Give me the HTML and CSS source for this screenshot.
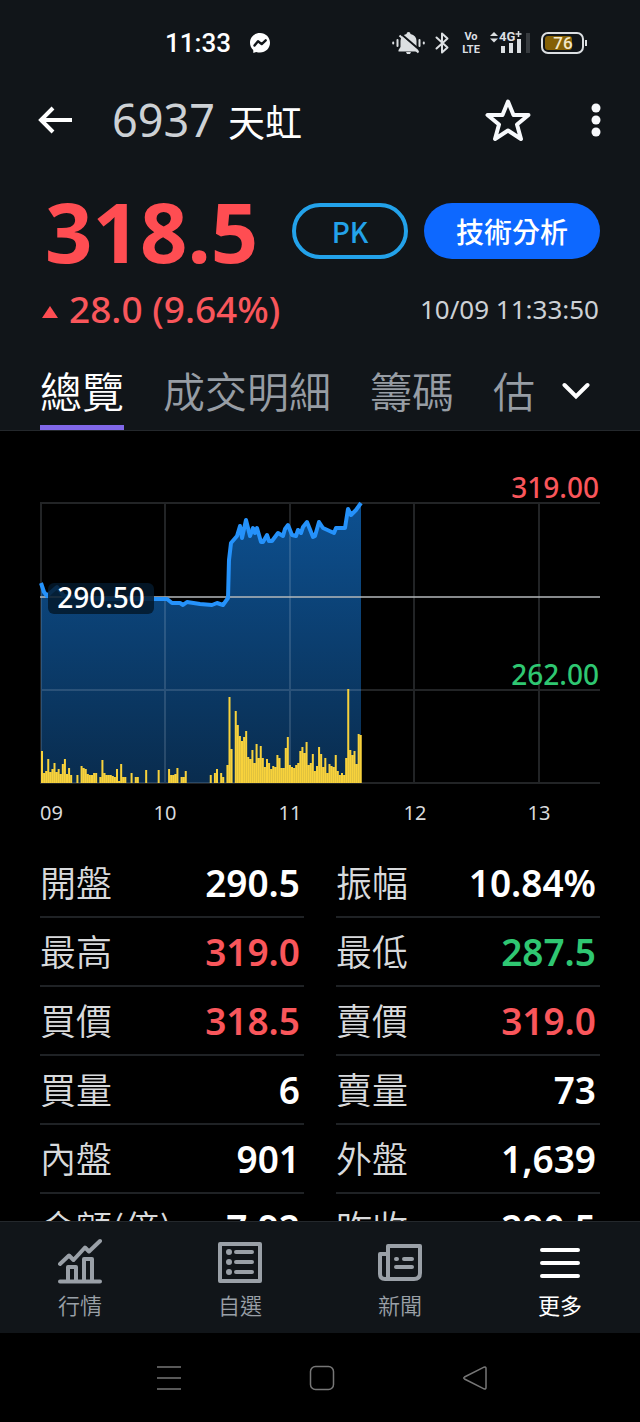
FILE: index.html
```html
<!DOCTYPE html>
<html lang="zh-Hant">
<head>
<meta charset="utf-8">
<meta name="viewport" content="width=device-width, initial-scale=1">
<title>6937 天虹</title>
<link rel="stylesheet" href="styles.css">
</head>
<body>
<header class="header">
  <div class="status">
    <div class="status-group">
      <time class="clock">11:33</time>
      <svg class="messenger" width="20" height="20" viewBox="0 0 20 20"><path d="M10 0C4.300 0 0 4.200 0 9.800c0 2.900 1.200 5.400 3.200 7.100l.2 3.100 2.800-1.100c1.200.4 2.500.6 3.800.6 5.700 0 10-4.200 10-9.700S15.700 0 10 0z" fill="#fff"/><path d="M4.500 12.500 8 8.200l3.700 2.900 4-3.800" fill="none" stroke="#111519" stroke-width="2.400" stroke-linejoin="round" stroke-linecap="round"/></svg>
    </div>
    <div class="status-group status-icons">
      <svg width="33" height="24" viewBox="0 0 33 24"><path d="M16.500 1a2 2 0 0 1 2 2c4 1 6 3.500 6 7v6l2 3v1.500h-20V19l2-3v-6c0-3.500 2-6 6-7a2 2 0 0 1 2-2z" fill="#dcdfe2"/><path d="M14 21h5l-1 2h-3z" fill="#dcdfe2"/><path d="M8.500 2.500 29 20" stroke="#111519" stroke-width="2"/><path d="m7.500 4.500 19 17" stroke="#dcdfe2" stroke-width="2"/><path d="M1.200 11.500v1M5.500 9v6M27.500 9v6M31.800 11.500v1" stroke="#dcdfe2" stroke-width="2" stroke-linecap="round"/></svg>
      <svg class="bluetooth" width="15" height="24" viewBox="0 0 15 24"><path d="m1.500 6.500 11 10L7 21.500v-19l5.500 5-11 10" fill="none" stroke="#dcdfe2" stroke-width="2" stroke-linejoin="round" stroke-linecap="round"/></svg>
      <svg class="volte" width="18" height="24" viewBox="0 0 18 24"><text class="tiny" x="9" y="9" text-anchor="middle">Vo</text><text class="tiny" x="9" y="22" text-anchor="middle">LTE</text></svg>
      <svg class="signal" width="40" height="24" viewBox="0 0 40 24"><path d="M0 5 4 1l4 4zM0 7.500h8l-4 4z" fill="#dcdfe2"/><path d="M11 15h4v7h-4zM19 12h4v10h-4zM27 8h4v14h-4z" fill="#dcdfe2"/><text class="tiny network" x="9" y="10">4G</text><path d="M28.500 0v6M25.500 3h6" stroke="#dcdfe2" stroke-width="1.500"/><path d="M36 2h4v20h-4z" fill="#373b3f"/></svg>
      <svg class="battery" width="46" height="22" viewBox="0 0 46 22"><rect x="1" y="1" width="41" height="20" rx="6" fill="none" stroke="#dcdfe2" stroke-width="2"/><rect x="4" y="4" width="27" height="14" rx="3" fill="#846006"/><path d="M45 8v6" stroke="#dcdfe2" stroke-width="2"/><text class="charge" x="22" y="17" text-anchor="middle">76</text></svg>
    </div>
  </div>

  <div class="appbar">
    <button class="icon-btn" aria-label="返回"><svg width="36" height="30" viewBox="0 0 36 30"><path d="M35 15H4M16 3 4 15l12 12" fill="none" stroke="#fff" stroke-width="4"/></svg></button>
    <h1 class="title"><span class="code">6937</span><span>天虹</span></h1>
    <button class="icon-btn" aria-label="加入自選"><svg width="46" height="44" viewBox="0 0 46 44"><path d="m23 3.500 5.500 13.500h15L32 26.500 36 41l-13-8.500L10 41l4-14.500L2.500 17h15z" fill="none" stroke="#f7f9fc" stroke-width="4" stroke-linejoin="round"/></svg></button>
    <button class="icon-btn more-btn" aria-label="更多選項"><svg width="10" height="34" viewBox="0 0 10 34"><g fill="#f7f9fc"><circle cx="5" cy="5" r="4.500"/><circle cx="5" cy="17" r="4.500"/><circle cx="5" cy="29" r="4.500"/></g></svg></button>
  </div>

  <div class="quote">
    <strong class="price">318.5</strong>
    <button class="pill pill-outline">PK</button>
    <button class="pill pill-solid">技術分析</button>
  </div>
  <div class="change-row">
    <span class="change"><svg width="16" height="18" viewBox="0 0 16 18"><path d="m8 6 8 12H0z" fill="#ff4d52"/></svg>28.0 (9.64%)</span>
    <time class="stamp">10/09 11:33:50</time>
  </div>

  <div class="tabbar">
    <nav class="tabs">
      <a class="tab active" href="#overview">總覽</a>
      <a class="tab" href="#trades">成交明細</a>
      <a class="tab" href="#chips">籌碼</a>
      <a class="tab" href="#value">估</a>
    </nav>
    <button class="icon-btn expand" aria-label="展開"><svg width="28" height="18" viewBox="0 0 28 18"><path d="m2.500 3 11.500 11.500L25.500 3" fill="none" stroke="#fff" stroke-width="4" stroke-linecap="round"/></svg></button>
  </div>
</header>

<main class="content" id="overview">
  <svg class="chart" viewBox="0 0 560 360" role="img" aria-label="當日走勢">
    <defs>
      <linearGradient id="area" x1="0" y1="0" x2="0" y2="1"><stop offset="0" stop-color="#0d5090"/><stop offset="1" stop-color="#092c4e"/></linearGradient>
    </defs>
    <path fill="url(#area)" d="M1 313V113l3 9 3 4 3-3 7-6 7 9 40 3h63l5 4h8l3 2 4-3 13 2 12 1 5-2 6 2 5-7 1-38 2-17 6-7 3-10 2 12 4-18 4 16 3-8 2 5 2-5 4 14h2l4-7 2 6 3 0 6-8 5 3 2-7 3-4 4 10 4 1 2-6 3 3 2-6 4-5 6 15 2-1 4-14 4 6 11 5 2-5h9l3-19 3 6 5-5 5-7V313z"/>
    <path d="M0 33h560M0 220h560M0 313h560M1 33v280M125 33v280M250 33v280M374 33v280M499 33v280" fill="none" stroke="#c8d4e0" stroke-opacity=".17" stroke-width="2"/>
    <path d="M0 127h560" stroke="#b4b8bb" stroke-opacity=".75" stroke-width="2"/>
    <path fill="none" stroke="#2592fb" stroke-width="4" stroke-linejoin="round" d="M1 113l3 9 3 4 3-3 7-6 7 9 40 3h63l5 4h8l3 2 4-3 13 2 12 1 5-2 6 2 5-7 1-38 2-17 6-7 3-10 2 12 4-18 4 16 3-8 2 5 2-5 4 14h2l4-7 2 6 3 0 6-8 5 3 2-7 3-4 4 10 4 1 2-6 3 3 2-6 4-5 6 15 2-1 4-14 4 6 11 5 2-5h9l3-19 3 6 5-5 5-7"/>
    <path id="volume" fill="#f8d23c"/>
    <rect x="8" y="113" width="106" height="31" rx="6" fill="#03192b" fill-opacity=".85"/>
    <text class="chart-price" x="61" y="138" text-anchor="middle">290.50</text>
    <text class="chart-price up" x="559" y="28" text-anchor="end">319.00</text>
    <text class="chart-price down" x="559" y="215" text-anchor="end">262.00</text>
    <g class="axis"><text x="0" y="350">09</text><text x="125" y="350" text-anchor="middle">10</text><text x="250" y="350" text-anchor="middle">11</text><text x="375" y="350" text-anchor="middle">12</text><text x="499" y="350" text-anchor="middle">13</text></g>
  </svg>

  <dl class="stats">
    <div class="stat"><dt>開盤</dt><dd>290.5</dd></div>
    <div class="stat"><dt>振幅</dt><dd>10.84%</dd></div>
    <div class="stat"><dt>最高</dt><dd class="up">319.0</dd></div>
    <div class="stat"><dt>最低</dt><dd class="down">287.5</dd></div>
    <div class="stat"><dt>買價</dt><dd class="up">318.5</dd></div>
    <div class="stat"><dt>賣價</dt><dd class="up">319.0</dd></div>
    <div class="stat"><dt>買量</dt><dd>6</dd></div>
    <div class="stat"><dt>賣量</dt><dd>73</dd></div>
    <div class="stat"><dt>內盤</dt><dd>901</dd></div>
    <div class="stat"><dt>外盤</dt><dd>1,639</dd></div>
    <div class="stat"><dt>金額(億)</dt><dd>7.92</dd></div>
    <div class="stat"><dt>昨收</dt><dd>290.5</dd></div>
  </dl>
</main>

<nav class="bottom-nav">
  <a class="nav-item" href="#market">
    <svg width="44" height="46" viewBox="0 0 44 46"><g fill="none" stroke="currentColor" stroke-width="4" stroke-linecap="round" stroke-linejoin="round"><path d="m2 26 9-8.500 4.500 4.500L27 9.500l4 4L42 3M2 43.500h40"/><path d="M10 43V29h8v14M26 43V21h8v22"/></g></svg>
    行情</a>
  <a class="nav-item" href="#watchlist">
    <svg width="44" height="46" viewBox="0 0 44 46"><rect x="2" y="6" width="40" height="37" fill="none" stroke="currentColor" stroke-width="4" stroke-linejoin="round"/><g fill="currentColor"><circle cx="11" cy="14" r="3"/><circle cx="11" cy="24" r="3"/><circle cx="11" cy="34" r="3"/></g><path d="M18 14h16M18 24h16M18 34h16" stroke="currentColor" stroke-width="4" stroke-linecap="round"/></svg>
    自選</a>
  <a class="nav-item" href="#news">
    <svg width="44" height="46" viewBox="0 0 44 46"><g fill="none" stroke="currentColor" stroke-width="4" stroke-linecap="round" stroke-linejoin="round"><path d="M10 36V8h32v27q0 6-6 6H7q-5 0-5-5V16h8M10 34v7"/><path d="M18 21h1M26 21h8M18 29h16"/></g></svg>
    新聞</a>
  <a class="nav-item current" href="#more">
    <svg width="44" height="46" viewBox="0 0 44 46"><path d="M4 12h36M4 25h36M4 38h36" stroke="currentColor" stroke-width="4" stroke-linecap="round"/></svg>
    更多</a>
</nav>

<footer class="system-nav">
  <button class="icon-btn" aria-label="最近使用"><svg width="26" height="26" viewBox="0 0 26 26"><path d="M1 2h24M1 13h24M1 24h24" stroke="#777" stroke-width="1.500"/></svg></button>
  <button class="icon-btn" aria-label="主畫面"><svg width="26" height="26" viewBox="0 0 26 26"><rect x="1.500" y="1.500" width="23" height="23" rx="5" fill="none" stroke="#777" stroke-width="1.500"/></svg></button>
  <button class="icon-btn" aria-label="返回上一頁"><svg width="26" height="26" viewBox="0 0 26 26"><path d="M22 2.200Q24 1.500 24 3.500v19q0 2-2 1.300L2.500 14q-1.500-1 0-2z" fill="none" stroke="#777" stroke-width="1.500"/></svg></button>
</footer>
<script src="app.js"></script>
</body>
</html>
```

FILE: styles.css
```css
* { box-sizing: border-box; }

body {
  margin: 0;
  height: 100vh;
  display: flex;
  flex-direction: column;
  overflow: hidden;
  background: #000;
  color: #fff;
  font-family: "Noto Sans", "Noto Sans CJK TC", sans-serif;
}

button {
  font-family: inherit;
  color: inherit;
  border: 0;
  cursor: pointer;
}

a { text-decoration: none; }
svg { display: block; flex: none; }
.up { color: #f9565b; fill: #f9565b; }
.down { color: #2fc772; fill: #2fc772; }

.icon-btn {
  background: none;
  padding: 0;
  flex: none;
}

.header {
  flex: none;
  background: #111519;
  border-bottom: 1px solid #24282c;
}

/* Device status */
.status {
  display: flex;
  justify-content: space-between;
  align-items: center;
  height: 86px;
  padding: 0 53px 0 165px;
}
.status-group { display: flex; align-items: center; gap: 19px; }
.status-icons { gap: 10px; }
.clock { font: 500 26px/32px Roboto, sans-serif; }
.volte { margin-left: 2px; overflow: visible; }
.tiny { font: 700 11px Roboto, sans-serif; fill: #dcdfe2; }
.tiny.network { font-size: 13px; }
.battery { margin-left: 1px; }
.charge { font: 500 17px Roboto, sans-serif; fill: #f4e8c8; }

/* Title bar */
.appbar {
  display: flex;
  align-items: center;
  height: 68px;
  padding: 0 39px 0 37px;
}
.title {
  display: flex;
  align-items: baseline;
  flex: 1;
  gap: 13px;
  margin: 0 0 0 39px;
  padding-top: 2px;
  font-size: 37px;
  font-weight: 400;
  line-height: 60px;
}
.code { font-size: 45px; color: #cdd1d5; }
.more-btn { margin-left: 60px; }

/* Quote */
.quote {
  display: flex;
  align-items: center;
  height: 122px;
  margin-top: 16px;
  padding: 0 40px 0 45px;
  gap: 16px;
}
.price {
  margin-right: auto;
  font-size: 83px;
  line-height: 96px;
  color: #ff4d52;
}
.pill {
  height: 56px;
  border-radius: 28px;
  font-size: 28px;
  font-weight: 500;
}
.pill-outline {
  width: 116px;
  border: 4px solid #23a2ea;
  background: none;
  color: #23a2ea;
  font-family: "Noto Sans CJK TC", sans-serif;
}
.pill-solid { width: 176px; padding: 0; background: #0d68ff; }

.change-row {
  display: flex;
  align-items: center;
  justify-content: space-between;
  height: 34px;
  padding: 0 41px 0 42px;
}
.change {
  display: flex;
  align-items: center;
  gap: 11px;
  font-size: 37px;
  font-weight: 500;
  line-height: 34px;
  color: #f9565b;
}
.stamp { font-size: 26px; line-height: 34px; color: #cdd1d5; }

/* Section tabs */
.tabbar {
  display: flex;
  align-items: center;
  padding: 0 50px 0 40px;
  height: 88px;
  margin-top: 16px;
}
.tabs {
  display: flex;
  flex: 1;
  min-width: 0;
  height: 100%;
  gap: 39px;
  margin-right: 24px;
  overflow: hidden;
}
.tab {
  flex: none;
  padding-top: 18px;
  font: 350 42px/60px "Noto Sans CJK TC", sans-serif;
  color: #979da4;
  white-space: nowrap;
}
.tab.active { color: #fff; border-bottom: 5px solid #8067e8; }
.expand { padding-top: 10px; }

/* Overview */
.content {
  flex: 1;
  min-height: 0;
  overflow: hidden;
  padding: 39px 40px 0;
}
.chart { width: 100%; height: auto; overflow: visible; }
.chart-price { font-size: 28px; font-weight: 500; }
text.chart-price:not(.up):not(.down) { fill: #fff; }
.axis { font-size: 20px; fill: #d8dadc; }

.stats {
  display: grid;
  grid-template-columns: 1fr 1fr;
  column-gap: 32px;
  margin: 19px 0 0;
}
.stat {
  display: flex;
  align-items: center;
  justify-content: space-between;
  height: 69px;
  padding-right: 4px;
  border-bottom: 2px solid #1f2225;
}
.stat dt { font: 350 36px/52px "Noto Sans CJK TC", sans-serif; color: #d8dadc; padding-bottom: 3px; }
.stat dd { margin: 0; font-size: 37px; line-height: 52px; font-weight: 600; }

/* App navigation */
.bottom-nav {
  flex: none;
  display: grid;
  grid-template-columns: repeat(4, 1fr);
  background: #111519;
  border-top: 1px solid #24282c;
}
.nav-item {
  display: flex;
  flex-direction: column;
  align-items: center;
  gap: 4px;
  padding: 16px 0 13px;
  font: 350 22px/32px "Noto Sans CJK TC", sans-serif;
  color: #9aa0a7;
}
.nav-item.current { color: #fff; font-weight: 400; }

.system-nav {
  flex: none;
  display: flex;
  justify-content: center;
  align-items: center;
  gap: 127px;
  height: 89px;
  padding-left: 4px;
}
```

FILE: app.js
```js
// Traded volume per minute, as bar heights; the session runs 09:00 to 13:30.
const volumes = [
  32, 10, 12, 24, 11, 14, 20, 11, 14, 9, 19, 24, 9, 15, 8, 0, 0, 8, 0, 17,
  15, 14, 9, 8, 8, 10, 10, 0, 6, 23, 10, 8, 8, 8, 7, 6, 14, 2, 19, 6,
  6, 0, 0, 10, 0, 6, 6, 0, 0, 0, 13, 0, 0, 0, 0, 0, 13, 0, 0, 0,
  0, 14, 8, 8, 9, 15, 0, 6, 6, 12, 0, 0, 0, 0, 0, 0, 0, 0, 0, 0,
  0, 8, 0, 10, 14, 0, 10, 6, 0, 18, 86, 34, 0, 72, 58, 47, 42, 46, 52, 26,
  24, 33, 20, 39, 25, 37, 25, 16, 24, 20, 14, 17, 16, 28, 25, 15, 15, 35, 46, 18,
  16, 15, 18, 20, 32, 36, 30, 41, 18, 20, 29, 12, 17, 36, 29, 16, 25, 10, 19, 17,
  16, 28, 12, 8, 10, 8, 25, 94, 33, 28, 32, 19, 49, 48
];
const minuteWidth = 125 / 60;
document.getElementById('volume').setAttribute('d', volumes
  .map((h, i) => h ? `M${(1 + i * minuteWidth).toFixed(2)} 313v-${h}h2v${h}z` : '')
  .join(''));
```
